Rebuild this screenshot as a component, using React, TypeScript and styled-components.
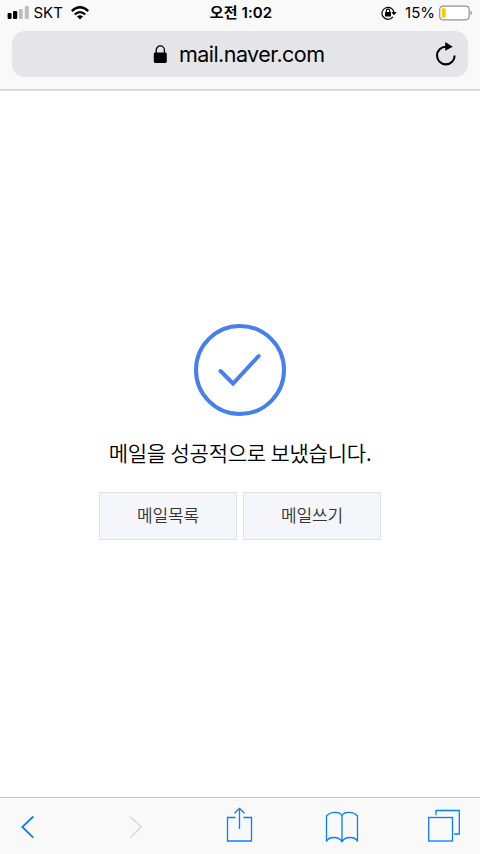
import React from 'react';
import styled, { createGlobalStyle } from 'styled-components';

const GlobalStyle = createGlobalStyle`
  * { box-sizing: border-box; }
  body { margin: 0; background: #fff; }
  button { font: inherit; }
`;

const Screen = styled.div`
  width: 480px;
  height: 854px;
  display: flex;
  flex-direction: column;
  overflow: hidden;
  color: #000;
  background: #fff;
  font-family: Inter, 'Noto Sans CJK KR', sans-serif;
  svg { display: block; flex: none; }
`;

const BrowserHeader = styled.header`
  height: 91px;
  flex: none;
  background: #f9f9f9;
  border-bottom: 2px solid #dadadb;
`;

const StatusBar = styled.div`
  height: 31px;
  display: grid;
  grid-template-columns: 1fr auto 1fr;
  align-items: center;
  padding: 0 7px 5px 7px;
  line-height: 20px;
`;

const StatusGroup = styled.div<{ $end?: boolean }>`
  display: flex;
  align-items: center;
  justify-content: ${p => (p.$end ? 'flex-end' : 'flex-start')};
`;

const Label = styled.span<{ $size: number; $spacing?: number; $left?: number; $right?: number; $weight?: number }>`
  font-size: ${p => p.$size}px;
  font-weight: ${p => p.$weight ?? 400};
  letter-spacing: ${p => p.$spacing ?? 0}px;
  margin-left: ${p => p.$left ?? 0}px;
  margin-right: ${p => p.$right ?? 0}px;
  white-space: nowrap;
`;

const AddressBar = styled.div`
  height: 46px;
  margin: 0 12px;
  padding: 0 11px 0 141px;
  display: flex;
  align-items: center;
  border-radius: 13px;
  background: #e5e5e7;
`;

const Address = styled.span`
  flex: 1;
  margin-left: 12px;
  font-size: 21.5px;
  line-height: 44px;
  letter-spacing: -0.55px;
`;

const Content = styled.main`
  flex: 1;
  display: flex;
  flex-direction: column;
  align-items: center;
  padding-top: 232px;
  font-family: 'Noto Sans CJK KR', sans-serif;
`;

const Message = styled.p`
  margin: 20px 0 0;
  height: 30px;
  line-height: 30px;
  font-size: 21px;
  font-weight: 350;
  letter-spacing: -0.22px;
  white-space: nowrap;
`;

const Actions = styled.div`
  display: flex;
  gap: 6px;
  margin-top: 25px;
`;

const ActionButton = styled.button`
  width: 138px;
  height: 48px;
  padding: 0 0 3px;
  color: #333;
  background: #f5f6fa;
  border: 1px solid #dce0e8;
  border-radius: 2px;
  font-size: 17px;
  font-weight: 350;
  letter-spacing: -0.2px;
`;

const Toolbar = styled.nav`
  height: 57px;
  flex: none;
  display: grid;
  grid-template-columns: 206px 102px 1fr auto;
  padding: 8px 20px 0;
  background: #f9f9f9;
  border-top: 1px solid #c5c5c6;
`;

const ToolButton = styled.button<{ $muted?: boolean }>`
  width: fit-content;
  height: 40px;
  padding: 0;
  border: 0;
  background: none;
  color: ${p => (p.$muted ? '#d9d9da' : '#087dfb')};
`;

const ShareButton = styled(ToolButton)`
  margin-left: -1px;
`;

const BookmarksButton = styled(ToolButton)`
  margin-left: -3px;
`;

const Navigation = styled.div`
  display: flex;
  gap: 92px;
`;

const Signal = () => (
  <svg width="23" height="14" viewBox="0 0 23 14">
    <rect x=".6" y="7" width="4" height="6" rx="1.2" />
    <rect x="6" y="5" width="4.2" height="8" rx="1.2" />
    <rect x="11.8" y="3" width="4" height="10" rx="1.2" fill="#bebebe" />
    <rect x="17.8" y="0" width="4" height="13" rx="1.2" fill="#bebebe" />
  </svg>
);

const Wifi = () => (
  <svg width="18" height="14" viewBox="0 0 18 14" fill="none" stroke="#000" strokeWidth="2.3">
    <path d="M.8 5.1Q9-2.5 17.2 5.1M3.8 8.5q5.2-4.7 10.4 0" />
    <path d="M6 10.6q3-2.5 6 0L9 13.4z" fill="#000" stroke="none" />
  </svg>
);

const RotationLock = () => (
  <svg width="16" height="14" viewBox="0 0 16 14" fill="none" stroke="#000" strokeWidth="1.2">
    <path d="M11.9 10.8A6 6 0 1 1 13 7" />
    <path d="M10.4 6.1h5.2L13 9.3z" fill="#000" stroke="none" />
    <rect x="4" y="5.9" width="6" height="4.6" rx=".5" fill="#000" stroke="none" />
    <path d="M5.3 6V4.9a1.7 1.7 0 0 1 3.4 0V6" />
  </svg>
);

const Battery = () => (
  <svg width="34" height="16" viewBox="0 0 34 16">
    <rect x=".7" y="1.2" width="29.4" height="13.6" rx="3.2" fill="#fff" stroke="#929292" strokeWidth="1.2" />
    <rect x="2.8" y="3.3" width="3.8" height="9.4" rx=".8" fill="#ffc800" />
    <path d="M31.5 5.8q1.5.6 1.5 2.2t-1.5 2.2z" fill="#929292" />
  </svg>
);

const Padlock = () => (
  <svg width="14" height="19" viewBox="0 0 14 19">
    <rect x=".8" y="7.5" width="13" height="10.5" rx="1.4" />
    <path d="M3.2 8V5.2a4.1 4.3 0 0 1 8.2 0V8" fill="none" stroke="#000" strokeWidth="1.35" />
  </svg>
);

const Reload = () => (
  <svg width="22" height="26" viewBox="0 0 22 26">
    <path d="M11 5.8A8.8 8.8 0 1 0 19.6 14.4" fill="none" stroke="#000" strokeWidth="2.1" />
    <path d="M10.2 1l7.6 4.7-7.6 4.1z" />
  </svg>
);

const SuccessMark = () => (
  <svg width="94" height="94" viewBox="0 0 94 94" fill="none" stroke="#477fed" strokeWidth="4">
    <circle cx="47" cy="47" r="44" />
    <path d="M27.5 48L40 60.5 65.7 33" strokeLinecap="round" />
  </svg>
);

const Back = () => (
  <svg width="16" height="40" viewBox="0 0 16 40" fill="none" stroke="currentColor" strokeWidth="1.8">
    <path d="M13.3 10.5L2.3 21l11 10.7" />
  </svg>
);

const Forward = () => (
  <svg width="16" height="40" viewBox="0 0 16 40" fill="none" stroke="currentColor" strokeWidth="1.5">
    <path d="M2 10.5L13.2 21 2 31.7" />
  </svg>
);

const Share = () => (
  <svg width="28" height="40" viewBox="0 0 28 40" fill="none" stroke="currentColor" strokeWidth="1.3">
    <path d="M10.5 11.5H2.5V35h24V11.5h-8M14.5 23V2.3M9.5 7.3l5-5 5 5" />
  </svg>
);

const Book = () => (
  <svg width="34" height="40" viewBox="0 0 34 40" fill="none" stroke="currentColor" strokeWidth="1.3">
    <path d="M17 9.4Q15.2 6.3 10 6.3T1.5 10V35.5Q3 31.5 9 31.5T17 36V9.4Q18.8 6.3 24 6.3T32.5 10V35.5Q31 31.5 25 31.5T17 36" />
  </svg>
);

const Tabs = () => (
  <svg width="32" height="40" viewBox="0 0 32 40" fill="none" stroke="currentColor" strokeWidth="1.3">
    <rect x=".7" y="11.5" width="23.8" height="23.5" />
    <path d="M8 9.3V4.5h23.3V28h-5.2" />
  </svg>
);

export default function App() {
  return (
    <Screen>
      <GlobalStyle />
      <BrowserHeader>
        <StatusBar>
          <StatusGroup>
            <Signal />
            <Label $size={15} $left={3.5} $right={8}>SKT</Label>
            <Wifi />
          </StatusGroup>
          <Label $size={15} $weight={600} $spacing={0.1} $left={2}>오전 1:02</Label>
          <StatusGroup $end>
            <RotationLock />
            <Label $size={15} $left={8} $right={4}>15%</Label>
            <Battery />
          </StatusGroup>
        </StatusBar>
        <AddressBar>
          <Padlock />
          <Address>mail.naver.com</Address>
          <Reload />
        </AddressBar>
      </BrowserHeader>
      <Content>
        <SuccessMark />
        <Message>메일을 성공적으로 보냈습니다.</Message>
        <Actions>
          <ActionButton>메일목록</ActionButton>
          <ActionButton>메일쓰기</ActionButton>
        </Actions>
      </Content>
      <Toolbar>
        <Navigation>
          <ToolButton aria-label="뒤로"><Back /></ToolButton>
          <ToolButton $muted aria-label="앞으로"><Forward /></ToolButton>
        </Navigation>
        <ShareButton aria-label="공유"><Share /></ShareButton>
        <BookmarksButton aria-label="책갈피"><Book /></BookmarksButton>
        <ToolButton aria-label="탭"><Tabs /></ToolButton>
      </Toolbar>
    </Screen>
  );
}
